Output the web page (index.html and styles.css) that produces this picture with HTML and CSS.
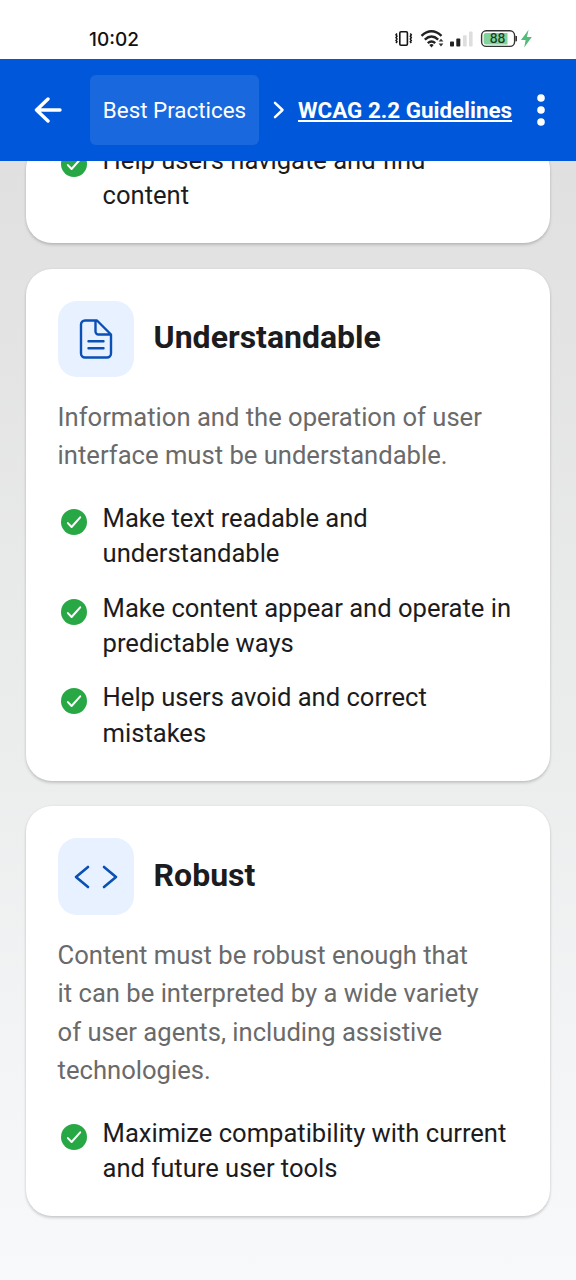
FILE: index.html
```html
<!DOCTYPE html>
<html lang="en">
<head>
<meta charset="utf-8">
<title>WCAG 2.2 Guidelines</title>
<link rel="stylesheet" href="styles.css">
</head>
<body>
<svg class="defs" width="0" height="0" aria-hidden="true">
  <symbol id="check" viewBox="0 0 26 26">
    <circle cx="13" cy="13" r="13" fill="#28a745"/>
    <path d="M6.9 14.1 10.6 18 19.2 8.3" fill="none" stroke="#fff" stroke-width="2" stroke-linecap="round" stroke-linejoin="round"/>
  </symbol>
</svg>
<div class="status">
  <span class="clock">10:02</span>
  <svg class="status-icons" width="140" height="24" viewBox="0 0 140 24">
    <g fill="none" stroke="#151515" stroke-width="1.6">
      <rect x="5.8" y="4.8" width="7.6" height="13.4" rx="1.2"/>
      <path d="M3 6.5l-1 1.3 1 1.4-1 1.4 1 1.4-1 1.4 1 1.4-1 1.2M16.3 6.5l1 1.3-1 1.4 1 1.4-1 1.4 1 1.4-1 1.4 1 1.2" stroke-width="1.5"/>
    </g>
    <g fill="none" stroke="#222" stroke-width="2.4">
      <path d="M27.5 8.8Q37.5-.3 47.5 8.8"/>
      <path d="M30.8 12.6Q37.5 6.4 44.2 12.6"/>
      <path d="M33.8 16.2Q37.5 12.7 41.2 16.2"/>
    </g>
    <path d="M35.3 17.9Q37.5 16 39.7 17.9L37.5 20.5Z" fill="#222"/>
    <path d="M44.6 14.6l2.4-2.9 2.4 2.9zM44.6 16.6l2.4 2.9 2.4-2.9z" fill="#333"/>
    <rect x="56" y="14.6" width="4" height="5" rx=".8" fill="#222"/>
    <rect x="62.3" y="11.6" width="4" height="8" rx=".8" fill="#222"/>
    <rect x="68.9" y="8.2" width="3.8" height="11.4" rx=".8" fill="#dedede"/>
    <rect x="75" y="4.4" width="3.6" height="15.2" rx=".8" fill="#dedede"/>
    <rect x="87.6" y="3.8" width="33" height="15.6" rx="4.6" fill="#fff" stroke="#333" stroke-width="1.4"/>
    <path d="M91.8 6h21.7v11.4H91.8a2.2 2.2 0 0 1-2.2-2.2V8.2a2.2 2.2 0 0 1 2.2-2.2z" fill="#82d29c"/>
    <path d="M122.2 9v5.2" stroke="#333" stroke-width="1.6"/>
    <text x="103.6" y="16" text-anchor="middle" class="level">88</text>
    <path d="M134.6 2.8 127 13h4.600l-1.400 7.400L137.800 10h-4.900z" fill="#55bb7b"/>
  </svg>
</div>
<header class="bar">
  <svg class="back" width="28" height="26" viewBox="0 0 28 26" fill="none" stroke="#fff" stroke-width="3.4" stroke-linecap="round" stroke-linejoin="round"><path d="M14 2 2.500 13 14 24M2.500 13H26"/></svg>
  <a class="crumb">Best Practices</a>
  <svg class="sep" width="12" height="18" viewBox="0 0 12 18" fill="none" stroke="#fff" stroke-width="2.500" stroke-linecap="round" stroke-linejoin="round"><path d="M2 1.800 9.500 9 2 16.200"/></svg>
  <a class="crumb-current">WCAG 2.2 Guidelines</a>
  <svg class="more" width="8" height="32" viewBox="0 0 8 32" fill="#fff"><circle cx="4" cy="4" r="3.800"/><circle cx="4" cy="16" r="3.800"/><circle cx="4" cy="28" r="3.800"/></svg>
</header>
<main class="content">
  <section class="card card-clipped">
    <ul class="list">
      <li><svg class="tick"><use href="#check"/></svg><span>Help users navigate and find<br>content</span></li>
    </ul>
  </section>
  <section class="card">
    <div class="head">
      <div class="badge">
        <svg width="34" height="40" viewBox="0 0 34 40" fill="none" stroke="#0a50b5" stroke-width="2.400" stroke-linecap="round" stroke-linejoin="round"><path d="M16.500 1.500H6a4 4 0 0 0-4 4v29a4 4 0 0 0 4 4h22a4 4 0 0 0 4-4V15.500L18 1.500H16.500V12.500a3 3 0 0 0 3 3h12M9.500 22.300h15M9.500 29.300h15"/></svg>
      </div>
      <h2>Understandable</h2>
    </div>
    <p>Information and the operation of user<br>interface must be understandable.</p>
    <ul class="list">
      <li><svg class="tick"><use href="#check"/></svg><span>Make text readable and<br>understandable</span></li>
      <li><svg class="tick"><use href="#check"/></svg><span>Make content appear and operate in<br>predictable ways</span></li>
      <li><svg class="tick"><use href="#check"/></svg><span>Help users avoid and correct<br>mistakes</span></li>
    </ul>
  </section>
  <section class="card">
    <div class="head">
      <div class="badge">
        <svg width="44" height="24" viewBox="0 0 44 24" fill="none" stroke="#0a50b5" stroke-width="2.600" stroke-linecap="round" stroke-linejoin="round"><path d="M14 2 2 12 14 22M30 2 42 12 30 22"/></svg>
      </div>
      <h2>Robust</h2>
    </div>
    <p>Content must be robust enough that<br>it can be interpreted by a wide variety<br>of user agents, including assistive<br>technologies.</p>
    <ul class="list">
      <li><svg class="tick"><use href="#check"/></svg><span>Maximize compatibility with current<br>and future user tools</span></li>
    </ul>
  </section>
</main>
</body>
</html>
```
FILE: styles.css
```css
* { box-sizing: border-box; }
body {
  margin: 0;
  height: 1280px;
  overflow: hidden;
  display: flex;
  flex-direction: column;
  font-family: Roboto, sans-serif;
  color: #1c1c1e;
  background: #fff;
}
.defs { position: absolute; }
.status {
  flex: none;
  height: 59px;
  padding: 27px 42px 0 89px;
  display: flex;
  justify-content: space-between;
  align-items: flex-start;
}
.clock { padding-top: 1px; font: 500 19px/24px Inter, sans-serif; color: #111; }
.level { font: 500 12.500px Inter, sans-serif; fill: #173c24; }
.bar {
  flex: none;
  height: 102px;
  padding-left: 34px;
  display: flex;
  align-items: center;
  background: #0057d9;
  color: #fff;
  font-size: 22.400px;
  white-space: nowrap;
}
.crumb {
  width: 169px;
  height: 70px;
  margin-left: 28px;
  line-height: 70px;
  text-align: center;
  border-radius: 6px;
  background: #1a68dd;
}
.sep { margin-left: 14px; }
.crumb-current {
  width: 214px;
  margin-left: 13px;
  font-weight: 700;
  text-decoration: underline;
  text-decoration-thickness: 1.500px;
  text-underline-offset: 2px;
}
.more { margin-left: 25px; }
.content {
  flex: 1;
  min-height: 0;
  overflow: hidden;
  padding: 0 25.600px;
  display: flex;
  flex-direction: column;
  gap: 25.600px;
  background: linear-gradient(#e0e0e0, #e4e4e4 18%, #eceeee 55%, #f8f9fb);
}
.card {
  flex: none;
  padding: 32px 32px 30px;
  border-radius: 26px;
  background: #fff;
  box-shadow: 0 2px 3px rgba(0, 0, 0, .17), 0 0 3px rgba(0, 0, 0, .06);
}
.card-clipped { height: 100px; margin-top: -18px; padding-top: 0; }
.head { display: flex; align-items: center; gap: 19.600px; }
.badge {
  width: 76.400px;
  height: 76.400px;
  display: flex;
  align-items: center;
  justify-content: center;
  border-radius: 19px;
  background: #e7f1ff;
}
h2 {
  margin: 0;
  padding-bottom: 4px;
  font-size: 32px;
  line-height: 40px;
  font-weight: 700;
}
p {
  margin: 21px 0 26.400px;
  font-size: 25.600px;
  line-height: 38.400px;
  color: #6a6a6a;
  white-space: nowrap;
}
.list {
  margin: 0;
  padding: 0;
  list-style: none;
  display: flex;
  flex-direction: column;
  gap: 19.200px;
  font-size: 25.600px;
  line-height: 35.200px;
  letter-spacing: -.02px;
  white-space: nowrap;
}
.list li { display: flex; gap: 16px; }
.tick { flex: none; width: 26px; height: 26px; margin: 8px 0 0 3px; }
```
